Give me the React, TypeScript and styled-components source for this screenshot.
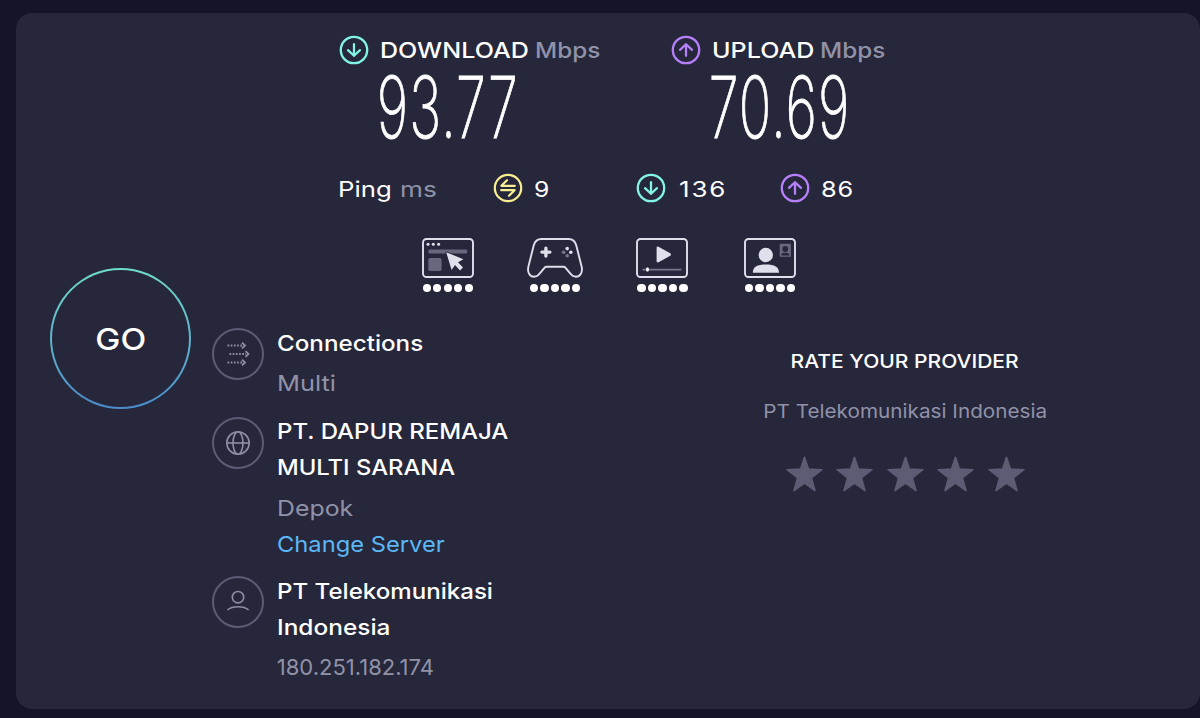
import { ReactNode } from 'react';
import styled, { createGlobalStyle } from 'styled-components';

const WHITE = '#ffffff';
const MUTED = '#9092a8';
const ICON_MUTED = '#8e8fa5';
const RING = '#5c5d74';
const LINK = '#5bb8f6';
const TEAL = '#83f3e6';
const PURPLE = '#b680fa';
const YELLOW = '#f7ef91';

type TextLine = {
  text: string;
  stretch: number;
  link?: boolean;
};

type DetailType = {
  icon: ReactNode;
  gap: number;
  titles: TextLine[];
  notes: TextLine[];
};

const DETAILS: DetailType[] = [
  {
    icon: <ConnectionsIcon />,
    gap: 12,
    titles: [{ text: 'Connections', stretch: 1.1 }],
    notes: [{ text: 'Multi', stretch: 1.155 }],
  },
  {
    icon: <GlobeIcon />,
    gap: 11,
    titles: [
      { text: 'PT. DAPUR REMAJA', stretch: 1.09 },
      { text: 'MULTI SARANA', stretch: 1.082 },
    ],
    notes: [
      { text: 'Depok', stretch: 1.13 },
      { text: 'Change Server', stretch: 1.078, link: true },
    ],
  },
  {
    icon: <PersonIcon />,
    gap: 0,
    titles: [
      { text: 'PT Telekomunikasi', stretch: 1.095 },
      { text: 'Indonesia', stretch: 1.11 },
    ],
    notes: [{ text: '180.251.182.174', stretch: 1 }],
  },
];

const QUALITY_ICONS = [BrowserIcon, GamepadIcon, PlayerIcon, VideoCallIcon];

const FIVE = [0, 1, 2, 3, 4];

export default function App() {
  return (
    <Page>
      <GlobalStyle />
      <Card>
        <GoColumn>
          <GoButton>
            <GoText>GO</GoText>
          </GoButton>
        </GoColumn>
        <Main>
          <SpeedRow>
            <Speed>
              <ArrowIcon color={TEAL} />
              <SpeedName $width={155}>
                <Text $stretch={1.14} $weight={500}>DOWNLOAD</Text>
              </SpeedName>
              <Text $stretch={1.105} $weight={500} $color={MUTED}>Mbps</Text>
              <SpeedValue>93.77</SpeedValue>
            </Speed>
            <Speed>
              <ArrowIcon color={PURPLE} up />
              <SpeedName $width={108}>
                <Text $stretch={1.14} $weight={500}>UPLOAD</Text>
              </SpeedName>
              <Text $stretch={1.105} $weight={500} $color={MUTED}>Mbps</Text>
              <SpeedValue>70.69</SpeedValue>
            </Speed>
          </SpeedRow>

          <PingRow>
            <PingLabel>
              <Text $stretch={1.17}>Ping</Text>
              <Text $stretch={1.19} $color={MUTED}>ms</Text>
            </PingLabel>
            <PingItem>
              <IdleIcon />
              <Text $stretch={1.12}>9</Text>
            </PingItem>
            <PingItem $gap={12.5}>
              <ArrowIcon color={TEAL} />
              <Text $stretch={1.18} $track={1.6}>136</Text>
            </PingItem>
            <PingItem>
              <ArrowIcon color={PURPLE} up />
              <Text $stretch={1.15} $track={0.8}>86</Text>
            </PingItem>
          </PingRow>

          <QualityRow>
            {QUALITY_ICONS.map((Icon, i) => (
              <Quality key={i}>
                <Icon />
                <Dots>
                  {FIVE.map((n) => (
                    <Dot key={n} />
                  ))}
                </Dots>
              </Quality>
            ))}
          </QualityRow>

          <Bottom>
            <Details>
              {DETAILS.map((detail) => (
                <Detail key={detail.titles[0].text} $gap={detail.gap}>
                  <Ring>{detail.icon}</Ring>
                  <DetailText>
                    {detail.titles.map((line) => (
                      <Text key={line.text} $stretch={line.stretch} $weight={500}>
                        {line.text}
                      </Text>
                    ))}
                    <Notes>
                      {detail.notes.map((line) => (
                        <Text
                          key={line.text}
                          $stretch={line.stretch}
                          $color={line.link ? LINK : MUTED}
                        >
                          {line.text}
                        </Text>
                      ))}
                    </Notes>
                  </DetailText>
                </Detail>
              ))}
            </Details>
            <Rate>
              <RateTitle>RATE YOUR PROVIDER</RateTitle>
              <RateName>PT Telekomunikasi Indonesia</RateName>
              <Stars>
                {FIVE.map((n) => (
                  <StarIcon key={n} />
                ))}
              </Stars>
            </Rate>
          </Bottom>
        </Main>
      </Card>
    </Page>
  );
}

function ArrowIcon({ color, up }: { color: string; up?: boolean }) {
  return (
    <RoundSvg viewBox="0 0 30 30" fill="none" stroke={color} strokeWidth="2.3" strokeLinecap="round">
      <circle cx="15" cy="15" r="13.2" />
      <g transform={up ? 'rotate(180 15 15)' : undefined}>
        <path d="M15 9.2V20.6M9 15.2l6 5.6 6-5.6" />
      </g>
    </RoundSvg>
  );
}

function IdleIcon() {
  return (
    <RoundSvg viewBox="0 0 30 30" fill="none" stroke={YELLOW} strokeWidth="2.2" strokeLinecap="round" strokeLinejoin="round">
      <circle cx="15" cy="15" r="13.2" />
      <path d="M21.8 12.8H8.4L14 7.2M8.2 17.2h13.4L16 22.8" />
    </RoundSvg>
  );
}

function BrowserIcon() {
  return (
    <svg width="52" height="40" viewBox="0 0 52 40" fill="none">
      <rect x="1" y="1" width="50" height="38" rx="3.5" stroke="#dfe0ec" strokeWidth="1.9" />
      <g fill="#dfe0ec">
        <circle cx="6" cy="6.2" r="1.5" />
        <circle cx="11.3" cy="6.2" r="1.5" />
        <circle cx="16.6" cy="6.2" r="1.5" />
      </g>
      <rect x="6.3" y="11.4" width="39" height="4" rx="1.5" fill="#67687e" />
      <rect x="6.3" y="20" width="13.3" height="13" rx="1.8" fill="#67687e" />
      <path
        d="M24.2 14.2L41.4 21.2 36 24.3 41 29.6 38 32.4 33 27 29.6 32Z"
        fill="#dfe0ec"
        stroke="#26273b"
        strokeWidth="1.6"
        paintOrder="stroke"
        strokeLinejoin="round"
      />
    </svg>
  );
}

function GamepadIcon() {
  return (
    <svg width="56" height="40" viewBox="0 0 56 40" fill="none">
      <path
        d="M14.5 1H41.5C46.2 1 48.2 3.4 49.3 7.4L54.6 28.6C56 34.6 52.9 38.7 48.9 38.7 46.6 38.7 45 37.7 43.6 35.8L38.6 29.8C37.9 29 37.3 28.7 36.4 28.7H19.6C18.7 28.7 18.1 29 17.4 29.8L12.4 35.8C11 37.7 9.4 38.7 7.1 38.7 3.1 38.7 0 34.6 1.4 28.6L6.7 7.4C7.8 3.4 9.8 1 14.5 1Z"
        stroke="#dfe0ec"
        strokeWidth="1.9"
        strokeLinejoin="round"
      />
      <path d="M18.9 10.1V18.1M14.9 14.1H22.9" stroke="#dfe0ec" strokeWidth="3.3" strokeLinecap="round" />
      <circle cx="40.2" cy="10.6" r="1.8" fill="#dfe0ec" />
      <circle cx="43.8" cy="14.2" r="1.8" fill="#dfe0ec" />
      <circle cx="40.2" cy="17.8" r="1.8" fill="#77788e" />
      <circle cx="36.6" cy="14.2" r="1.8" fill="#77788e" />
    </svg>
  );
}

function PlayerIcon() {
  return (
    <svg width="52" height="40" viewBox="0 0 52 40" fill="none">
      <rect x="1" y="1" width="50" height="38" rx="3.5" stroke="#dfe0ec" strokeWidth="1.9" />
      <path
        d="M21.9 9.8L33.6 16.5 21.9 23.2Z"
        fill="#dfe0ec"
        stroke="#dfe0ec"
        strokeWidth="2.6"
        strokeLinejoin="round"
      />
      <path d="M6.5 31.6H45.3" stroke="#77788e" strokeWidth="1.6" />
      <rect x="10.2" y="29.6" width="2.6" height="4" rx="1" fill="#fff" />
    </svg>
  );
}

function VideoCallIcon() {
  return (
    <svg width="52" height="40" viewBox="0 0 52 40" fill="none">
      <rect x="1" y="1" width="50" height="38" rx="3.5" stroke="#dfe0ec" strokeWidth="1.9" />
      <circle cx="21.8" cy="17" r="7.2" fill="#dfe0ec" />
      <path d="M8.8 34.8C8.8 28.8 13 26.4 21.8 26.4S35 28.8 35 34.8Z" fill="#dfe0ec" />
      <rect x="35.7" y="5.8" width="11.2" height="13" fill="#67687e" />
      <circle cx="41.3" cy="11" r="2.9" fill="#26273b" />
      <path d="M37.2 17.6C37.2 15.4 39 14.8 41.3 14.8S45.4 15.4 45.4 17.6Z" fill="#26273b" />
    </svg>
  );
}

function ConnectionsIcon() {
  return (
    <svg width="24" height="24" viewBox="0 0 24 24" fill="none" stroke={ICON_MUTED} strokeWidth="1.8">
      <path d="M1.5 3.5H17M3.5 12H20M1.5 20.5H17" strokeDasharray="1.7 1.5" />
      <path d="M16 .6L19 3.5 16 6.4M19.5 9.1L22.5 12 19.5 14.9M16 17.6L19 20.5 16 23.4" />
    </svg>
  );
}

function GlobeIcon() {
  return (
    <svg width="24" height="24" viewBox="0 0 24 24" fill="none" stroke={ICON_MUTED} strokeWidth="1.6">
      <circle cx="12" cy="12" r="11.2" />
      <ellipse cx="12" cy="12" rx="5" ry="11.2" />
      <path d="M.8 12H23.2" />
    </svg>
  );
}

function PersonIcon() {
  return (
    <svg width="24" height="24" viewBox="0 0 24 24" fill="none" stroke={ICON_MUTED} strokeWidth="1.6">
      <circle cx="12" cy="7.2" r="5.7" />
      <path d="M1.4 20C4 17.7 8 16.8 12 16.8S20 17.7 22.6 20" />
    </svg>
  );
}

function StarIcon() {
  return (
    <svg width="37" height="36" viewBox="0 0 37 36">
      <path
        d="M18.5 1.2L22.4 13.1 35.9 13.7 25.4 21.8 29 34.6 18.5 27.2 8 34.6 11.6 21.8 1.1 13.7 14.6 13.1Z"
        fill={RING}
        stroke={RING}
        strokeWidth="1.6"
        strokeLinejoin="round"
      />
    </svg>
  );
}

const GlobalStyle = createGlobalStyle`
  * {
    box-sizing: border-box;
  }

  body {
    margin: 0;
    background-color: #141526;
    color: ${WHITE};
    font-family: Inter, 'Liberation Sans', sans-serif;
  }

  svg {
    display: block;
    flex: none;
  }
`;

const Page = styled.main`
  height: 718px;
  padding: 13px 0 9px 16px;
`;

const Card = styled.section`
  display: flex;
  height: 100%;
  border-radius: 16px;
  background-color: #26273b;
`;

const Text = styled.span<{
  $stretch: number;
  $weight?: number;
  $color?: string;
  $track?: number;
}>`
  display: block;
  font-size: 22px;
  line-height: 36px;
  font-weight: ${(p) => p.$weight ?? 400};
  color: ${(p) => p.$color ?? WHITE};
  letter-spacing: ${(p) => p.$track ?? 0}px;
  white-space: nowrap;
  transform: scaleX(${(p) => p.$stretch});
  transform-origin: left;
`;

const GoColumn = styled.div`
  flex: none;
  width: 196px;
  padding: 255px 0 0 34px;
`;

const GoButton = styled.button`
  display: flex;
  align-items: center;
  justify-content: center;
  width: 141px;
  height: 141px;
  padding: 0;
  border: 2px solid transparent;
  border-radius: 50%;
  background:
    linear-gradient(#26273b, #26273b) padding-box,
    linear-gradient(#70dcc8, #4b8ccc) border-box;
  color: ${WHITE};
  font-family: inherit;
`;

const GoText = styled.span`
  font-size: 30px;
  font-weight: 500;
  transform: scaleX(1.12);
`;

const Main = styled.div`
  flex: 1;
  display: flex;
  flex-direction: column;
`;

const RoundSvg = styled.svg`
  width: 30px;
  height: 30px;
`;

const SpeedRow = styled.div`
  display: flex;
  flex: none;
  height: 144px;
  padding: 19px 0 0 127px;
`;

const Speed = styled.div`
  display: flex;
  flex-wrap: wrap;
  align-content: flex-start;
  align-items: center;
  width: 331.5px;
`;

const SpeedName = styled.div<{ $width: number }>`
  width: ${(p) => p.$width}px;
  margin-left: 11.3px;
`;

const SpeedValue = styled.div`
  width: 100%;
  padding-left: 60px;
  font-size: 85.5px;
  line-height: 79px;
  font-weight: 200;
  letter-spacing: 1.6px;
  -webkit-text-stroke: 0.9px ${WHITE};
  transform: scaleX(0.63);
  transform-origin: left;
`;

const PingRow = styled.div`
  display: grid;
  flex: none;
  grid-template-columns: 154px 143px 143.5px 120px;
  align-items: center;
  height: 62px;
  padding-left: 127px;
`;

const PingLabel = styled.div`
  display: grid;
  grid-template-columns: 62px auto;
  margin-left: -0.6px;
  padding-top: 1px;
`;

const PingItem = styled.div<{ $gap?: number }>`
  display: flex;
  align-items: center;
  gap: ${(p) => p.$gap ?? 11}px;

  ${Text} {
    padding-top: 1px;
  }
`;

const QualityRow = styled.div`
  display: grid;
  grid-template-columns: repeat(4, 107.4px);
  padding: 19px 0 0 182px;
`;

const Quality = styled.div`
  display: flex;
  flex-direction: column;
  align-items: center;
  gap: 5.5px;
`;

const Dots = styled.div`
  display: flex;
  gap: 2.2px;
`;

const Dot = styled.span`
  width: 8.3px;
  height: 8.3px;
  border-radius: 50%;
  background-color: ${WHITE};
`;

const Bottom = styled.div`
  display: flex;
  padding-top: 33.2px;
`;

const Details = styled.div`
  width: 470px;
`;

const Detail = styled.div<{ $gap: number }>`
  display: flex;
  gap: 12.8px;
  margin-bottom: ${(p) => p.$gap}px;
`;

const Ring = styled.div`
  display: flex;
  align-items: center;
  justify-content: center;
  flex: none;
  width: 52px;
  height: 52px;
  margin-top: 3.5px;
  border: 2px solid ${RING};
  border-radius: 50%;
`;

const DetailText = styled.div`
  display: flex;
  flex-direction: column;
`;

const Notes = styled.div`
  padding-top: 4.3px;
`;

const Rate = styled.div`
  display: flex;
  flex-direction: column;
  align-items: center;
  width: 446px;
  padding-top: 18px;
`;

const RateTitle = styled.h2`
  margin: 0;
  font-size: 19.3px;
  line-height: 36px;
  font-weight: 500;
  white-space: nowrap;
  transform: scaleX(1.09);
`;

const RateName = styled.p`
  margin: 15px 0 0;
  color: ${MUTED};
  font-size: 19px;
  line-height: 36px;
  white-space: nowrap;
  transform: scaleX(1.09);
`;

const Stars = styled.div`
  display: flex;
  gap: 13.5px;
  margin-top: 26px;
`;
